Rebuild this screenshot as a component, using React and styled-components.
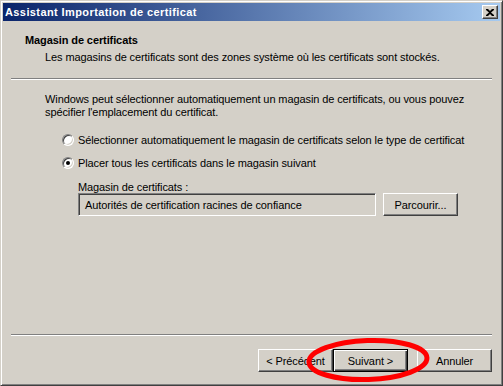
import React from "react";
import styled, { createGlobalStyle } from "styled-components";

const face = "#d4d0c8";

const GlobalStyle = createGlobalStyle`
  html, body {
    margin: 0;
    padding: 0;
    background: ${face};
  }
  body {
    font-family: "Liberation Sans", Arial, sans-serif;
    font-size: 11px;
    letter-spacing: -0.1px;
    color: #000;
  }
`;

export default function App() {
  return (
    <>
      <GlobalStyle />
      <Window>
        <TitleBar>
          <Title>Assistant Importation de certificat</Title>
          <CloseButton>
            <svg width="8" height="7" viewBox="0 0 8 7">
              <path d="M0 0h2l2 2 2-2h2v1L5 3.5 8 6v1H6L4 5 2 7H0V6l3-2.5L0 1z" fill="#000" />
            </svg>
          </CloseButton>
        </TitleBar>
        <Client>
          <Header>
            <Heading>Magasin de certificats</Heading>
            <SubHeading>
              Les magasins de certificats sont des zones système où les certificats sont stockés.
            </SubHeading>
          </Header>
          <Rule />
          <Body>
            <Intro>
              Windows peut sélectionner automatiquement un magasin de certificats, ou vous pouvez
              <br />
              spécifier l'emplacement du certificat.
            </Intro>
            <Options>
              <Option>
                <Radio />
                Sélectionner automatiquement le magasin de certificats selon le type de certificat
              </Option>
              <Option>
                <Radio checked />
                Placer tous les certificats dans le magasin suivant
              </Option>
            </Options>
            <StoreBlock>
              <span>Magasin de certificats :</span>
              <StoreRow>
                <TextBox>Autorités de certification racines de confiance</TextBox>
                <Button $width={75} $height={23}>Parcourir...</Button>
              </StoreRow>
            </StoreBlock>
          </Body>
          <Rule />
          <Footer>
            <Button>&lt; Précédent</Button>
            <Button $default>Suivant &gt;</Button>
            <Gap />
            <Button>Annuler</Button>
          </Footer>
        </Client>
        <Circle width="140" height="60" viewBox="0 0 140 60">
          <ellipse cx="70" cy="25" rx="59" ry="19.5" fill="none" stroke="#f00" strokeWidth="5" transform="rotate(-2 70 25)" />
        </Circle>
      </Window>
    </>
  );
}

const Window = styled.div`
  position: relative;
  box-sizing: border-box;
  width: 503px;
  height: 386px;
  display: flex;
  flex-direction: column;
  padding: 2px;
  background: ${face};
  border: 1px solid;
  border-color: ${face} #404040 #404040 ${face};
  box-shadow: inset 1px 1px #fff, inset -1px -1px #808080;
  overflow: hidden;
`;

const TitleBar = styled.div`
  height: 18px;
  display: flex;
  align-items: center;
  justify-content: space-between;
  padding: 0 2px 0 2px;
  background: linear-gradient(to right, #0a246a, #a6caf0);
`;

const Title = styled.span`
  color: #fff;
  font-weight: bold;
  font-size: 11px;
  letter-spacing: 0.4px;
`;

const CloseButton = styled.div`
  box-sizing: border-box;
  width: 16px;
  height: 14px;
  display: flex;
  align-items: center;
  justify-content: center;
  background: ${face};
  border: 1px solid;
  border-color: #fff #404040 #404040 #fff;
  box-shadow: inset -1px -1px #808080;
`;

const Client = styled.div`
  flex: 1;
  display: flex;
  flex-direction: column;
  padding: 0 8px;
`;

const Header = styled.div`
  height: 57px;
  display: flex;
  flex-direction: column;
  padding: 13px 0 0 14px;
  box-sizing: border-box;
  gap: 5px;
`;

const Heading = styled.div`
  font-weight: bold;
`;

const SubHeading = styled.div`
  padding-left: 20px;
`;

const Rule = styled.div`
  height: 1px;
  background: #808080;
  border-bottom: 1px solid #fff;
`;

const Body = styled.div`
  flex: 1;
  padding: 13px 0 0 34px;
  display: flex;
  flex-direction: column;
`;

const Intro = styled.div`
  line-height: 13px;
`;

const Options = styled.div`
  display: flex;
  flex-direction: column;
  gap: 10px;
  margin: 14px 0 0 17px;
`;

const Option = styled.label`
  display: flex;
  align-items: center;
  gap: 4px;
  height: 13px;
`;

const Radio = styled.span`
  position: relative;
  box-sizing: border-box;
  width: 12px;
  height: 12px;
  border-radius: 50%;
  background: #fff;
  border: 1px solid;
  border-color: #808080 #fff #fff #808080;
  box-shadow: inset 1px 1px #404040, inset -1px -1px ${face};
  &::after {
    content: "";
    display: ${(p) => (p.checked ? "block" : "none")};
    position: absolute;
    left: 3px;
    top: 3px;
    width: 4px;
    height: 4px;
    border-radius: 50%;
    background: #000;
  }
`;

const StoreBlock = styled.div`
  display: flex;
  flex-direction: column;
  gap: 0;
  margin: 12px 0 0 33px;
`;

const StoreRow = styled.div`
  display: flex;
  align-items: flex-start;
  gap: 7px;
`;

const TextBox = styled.div`
  box-sizing: border-box;
  width: 298px;
  height: 23px;
  display: flex;
  align-items: center;
  padding-left: 6px;
  border: 1px solid;
  border-color: #808080 #fff #fff #808080;
  box-shadow: inset 1px 1px #404040, inset -1px -1px ${face};
`;

const Button = styled.div`
  box-sizing: border-box;
  width: ${(p) => p.$width || 75}px;
  height: ${(p) => p.$height || 23}px;
  display: flex;
  align-items: center;
  justify-content: center;
  background: ${face};
  border: 1px solid;
  border-color: ${(p) => (p.$default ? "#000" : "#fff #404040 #404040 #fff")};
  box-shadow: ${(p) =>
    p.$default
      ? "inset 1px 1px #fff, inset -1px -1px #404040, inset -2px -2px #808080"
      : "inset -1px -1px #808080"};
`;

const Footer = styled.div`
  height: 47px;
  display: flex;
  align-items: flex-start;
  justify-content: flex-end;
  padding-top: 13px;
  box-sizing: border-box;
`;

const Gap = styled.div`
  width: 9px;
`;

const Circle = styled.svg`
  position: absolute;
  left: 297px;
  top: 334px;
`;
